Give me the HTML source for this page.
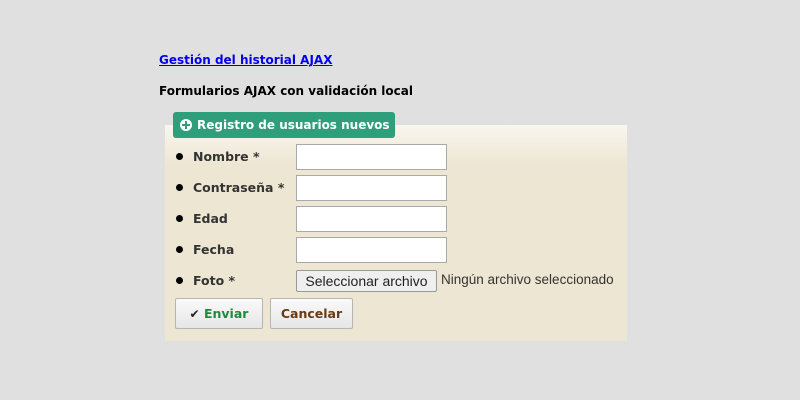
<!DOCTYPE html>
<html><head><meta charset="utf-8"><style>
body{margin:0;width:800px;height:400px;background:#e0e0e0;font-family:"DejaVu Sans","Liberation Sans",sans-serif;position:relative;overflow:hidden}
.a{position:absolute;white-space:nowrap}
a{color:#0000ee;text-decoration:underline;font-weight:bold;font-size:12px}
.h{font-weight:bold;font-size:12px;color:#000}
.panel{left:165px;top:125px;width:462px;height:216px;background:linear-gradient(#f8f6ee 0px,#ede6d3 40px,#ede6d3)}
.leg{left:173px;top:112px;width:222px;height:26px;background:#2f9e7a;border-radius:3px;color:#fff;font-weight:bold;font-size:12px;line-height:26px;box-sizing:border-box;padding-left:24px}
.leg i{position:absolute;left:7px;top:7px;width:12px;height:12px;border-radius:50%;background:#fff}
.leg i:before{content:"";position:absolute;left:5px;top:2px;width:2px;height:8px;background:#2f9e7a}
.leg i:after{content:"";position:absolute;left:2px;top:5px;width:8px;height:2px;background:#2f9e7a}
.lab{left:193px;font-weight:bold;font-size:12.5px;color:#333;line-height:20px}
.dot{left:176px;width:7px;height:7px;border-radius:50%;background:#000}
.inp{left:296px;width:151px;height:26px;background:#fff;border:1px solid #a9a9a9;box-sizing:border-box}
.file{left:296px;top:270px;width:141px;height:22px;background:#efefef;border:1px solid #999;border-radius:2px;box-sizing:border-box;font-family:"Liberation Sans",sans-serif;font-size:14px;text-align:center;line-height:20px;color:#222}
.ftxt{left:441px;top:272px;font-family:"Liberation Sans",sans-serif;font-size:13.5px;color:#333}
.btn{top:298px;height:31px;background:linear-gradient(#fafafa,#e6e6e6);border:1px solid #b5b5b5;border-radius:2px;box-sizing:border-box;font-weight:bold;font-size:12.5px;line-height:29px;text-align:center}
</style></head><body>
<a class="a" style="left:159px;top:53px" href="#">Gestión del historial AJAX</a>
<div class="a h" style="left:159px;top:84px">Formularios AJAX con validación local</div>
<div class="a panel"></div>
<div class="a leg"><i></i>Registro de usuarios nuevos</div>
<div class="a dot" style="top:153px"></div><div class="a lab" style="top:147px">Nombre *</div><div class="a inp" style="top:144px"></div>
<div class="a dot" style="top:184px"></div><div class="a lab" style="top:178px">Contraseña *</div><div class="a inp" style="top:175px"></div>
<div class="a dot" style="top:215px"></div><div class="a lab" style="top:209px">Edad</div><div class="a inp" style="top:206px"></div>
<div class="a dot" style="top:246px"></div><div class="a lab" style="top:240px">Fecha</div><div class="a inp" style="top:237px"></div>
<div class="a dot" style="top:277px"></div><div class="a lab" style="top:271px">Foto *</div>
<div class="a file">Seleccionar archivo</div><div class="a ftxt">Ningún archivo seleccionado</div>
<div class="a btn" style="left:175px;width:88px;color:#1e8a3e"><span style="color:#222;font-size:12px">✔</span> Enviar</div>
<div class="a btn" style="left:270px;width:83px;color:#6b3a10">Cancelar</div>
</body></html>
